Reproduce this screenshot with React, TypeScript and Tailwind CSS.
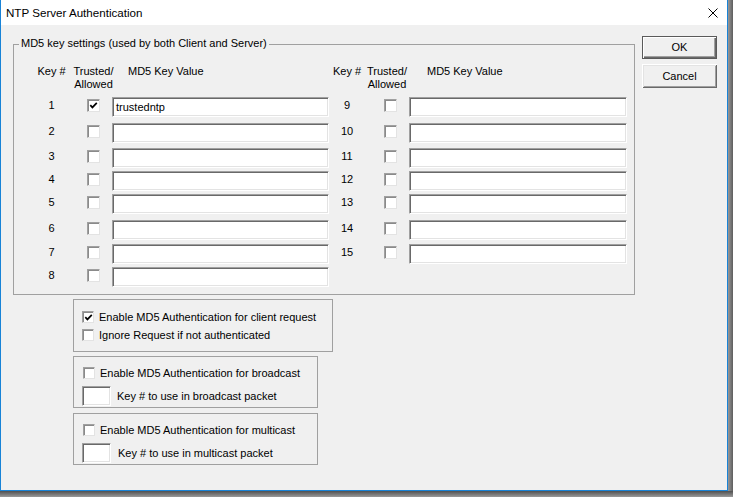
import React from "react";

const rowGaps = ["mt-[6px]", "mt-[6px]", "mt-[5px]", "mt-[3px]", "mt-[3px]", "mt-[6px]", "mt-[4px]", "mt-[3px]"];

function Check({ checked = false, small = false }: { checked?: boolean; small?: boolean }) {
  return (
    <div
      className={`${small ? "w-[12px] h-[12px]" : "w-[13px] h-[13px]"} shrink-0 bg-white border border-t-[#a0a0a0] border-l-[#a0a0a0] border-b-[#e3e3e3] border-r-[#e3e3e3] shadow-[inset_1px_1px_0_#8a8a8a] flex items-center justify-center`}
    >
      {checked && (
        <svg viewBox="0 0 9 9" className="w-[9px] h-[9px]">
          <path d="M1.3 4.2 L3.4 6.4 L7.8 1.8" stroke="#000" strokeWidth="1.7" fill="none" />
        </svg>
      )}
    </div>
  );
}

function TextBox({ className = "", value = "" }: { className?: string; value?: string }) {
  return (
    <div
      className={`${className} shrink-0 bg-white border border-t-[#a0a0a0] border-l-[#a0a0a0] border-b-[#ffffff] border-r-[#ffffff] shadow-[inset_1px_1px_0_#696969,inset_-1px_-1px_0_#e3e3e3] pl-[3px] flex items-center`}
    >
      {value}
    </div>
  );
}

function KeyRow({ left, right, value, checked, gap }: { left: number; right?: number; value?: string; checked?: boolean; gap: string }) {
  return (
    <div className={`flex items-start ${gap}`}>
      <div className="ml-[16px] w-[43px] text-center mt-[2px]">{left}</div>
      <div className="w-[39px] pl-[14px] mt-[2px]">
        <Check checked={checked} />
      </div>
      <TextBox className="w-[217px] h-[20px]" value={value} />
      {right !== undefined && (
        <>
          <div className="w-[36px] text-center mt-[2px]">{right}</div>
          <div className="w-[44px] pl-[19px] mt-[2px]">
            <Check />
          </div>
          <TextBox className="w-[218px] h-[20px]" />
        </>
      )}
    </div>
  );
}

function HeaderCells({ keyW, trustW, valuePad }: { keyW: string; trustW: string; valuePad: string }) {
  return (
    <>
      <div className={`${keyW} text-center`}>Key #</div>
      <div className={`${trustW} text-center`}>
        <div>Trusted/</div>
        <div>Allowed</div>
      </div>
      <div className={valuePad}>MD5 Key Value</div>
    </>
  );
}

export default function App() {
  const rows = [1, 2, 3, 4, 5, 6, 7, 8];
  return (
    <div className="w-[733px] h-[497px] flex flex-col bg-[#7c7c7c] font-['Liberation_Sans',Arial,sans-serif] text-[11px] leading-[13px] text-black">
      <div className="flex">
        <div className="w-[728px] h-[491px] flex flex-col border-x border-b border-[#1883d7] bg-[#f0f0f0]">
          {/* title bar */}
          <div className="h-[25px] bg-white flex items-center justify-between pl-[5px] pr-[9px] shrink-0">
            <span className="text-[11.6px]">NTP Server Authentication</span>
            <svg viewBox="0 0 10 10" className="w-[10px] h-[10px]">
              <path d="M0.5 0.5 L9.5 9.5 M9.5 0.5 L0.5 9.5" stroke="#000" strokeWidth="1" fill="none" />
            </svg>
          </div>

          <div className="flex flex-1">
            <div className="flex flex-col pl-[12px] pt-[19px]">
              {/* MD5 key settings group */}
              <div className="relative w-[622px] h-[251px] border border-[#a0a0a0] pt-[20px]">
                <span className="absolute -top-[8px] left-[5px] px-[2px] bg-[#f0f0f0]">
                  MD5 key settings (used by both Client and Server)
                </span>
                <div className="flex">
                  <div className="ml-[16px] flex">
                    <HeaderCells keyW="w-[43px]" trustW="w-[41px]" valuePad="w-[215px] pl-[14px]" />
                  </div>
                  <HeaderCells keyW="w-[36px]" trustW="w-[44px]" valuePad="pl-[18px]" />
                </div>
                {rows.map((n, i) => (
                  <KeyRow
                    key={n}
                    left={n}
                    right={n < 8 ? n + 8 : undefined}
                    value={n === 1 ? "trustedntp" : ""}
                    checked={n === 1}
                    gap={rowGaps[i]}
                  />
                ))}
              </div>

              {/* client request */}
              <div className="ml-[60px] mt-[4px] w-[260px] h-[53px] border border-[#a0a0a0] pl-[8px] pt-[11px]">
                <div className="flex items-center h-[12px]">
                  <Check checked small />
                  <span className="ml-[5px]">Enable MD5 Authentication for client request</span>
                </div>
                <div className="flex items-center h-[12px] mt-[6px]">
                  <Check small />
                  <span className="ml-[5px]">Ignore Request if not authenticated</span>
                </div>
              </div>

              {/* broadcast */}
              <div className="ml-[60px] mt-[4px] w-[245px] h-[52px] border border-[#a0a0a0] pl-[8px] pt-[10px]">
                <div className="flex items-center h-[12px] pl-[1px]">
                  <Check small />
                  <span className="ml-[5px]">Enable MD5 Authentication for broadcast</span>
                </div>
                <div className="flex items-center mt-[7px]">
                  <TextBox className="w-[29px] h-[20px]" />
                  <span className="ml-[6px]">Key # to use in broadcast packet</span>
                </div>
              </div>

              {/* multicast */}
              <div className="ml-[60px] mt-[5px] w-[245px] h-[52px] border border-[#a0a0a0] pl-[8px] pt-[10px]">
                <div className="flex items-center h-[12px] pl-[1px]">
                  <Check small />
                  <span className="ml-[5px]">Enable MD5 Authentication for multicast</span>
                </div>
                <div className="flex items-center mt-[7px]">
                  <TextBox className="w-[29px] h-[20px]" />
                  <span className="ml-[7px]">Key # to use in multicast packet</span>
                </div>
              </div>
            </div>

            {/* buttons */}
            <div className="flex flex-col ml-[7px] pt-[11px]">
              <button className="w-[75px] h-[23px] bg-[#f0f0f0] border border-[#5a5a5a] shadow-[inset_1px_1px_0_#ffffff,inset_-1px_-1px_0_#696969,inset_-2px_-2px_0_#a0a0a0]">
                OK
              </button>
              <button className="w-[75px] h-[24px] mt-[5px] bg-[#f0f0f0] shadow-[inset_1px_1px_0_#ffffff,inset_-1px_-1px_0_#696969,inset_2px_2px_0_#e3e3e3,inset_-2px_-2px_0_#a0a0a0]">
                Cancel
              </button>
            </div>
          </div>
        </div>
        <div className="w-[5px] h-[491px] bg-gradient-to-r from-[#9a9a9a] to-[#5e5e5e]" />
      </div>
      <div className="flex-1 bg-gradient-to-b from-[#505050] to-[#9a9a9a]" />
    </div>
  );
}
